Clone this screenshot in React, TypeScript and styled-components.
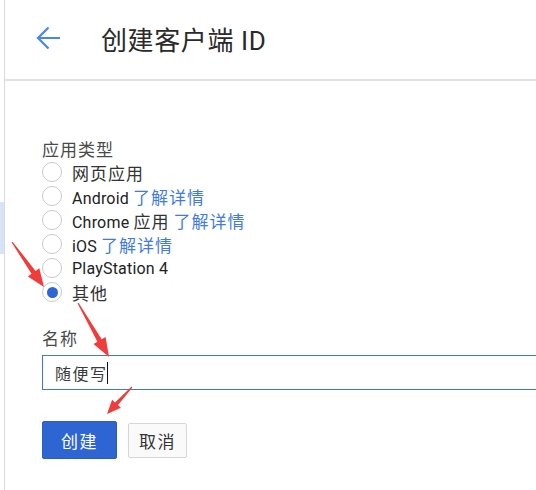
import React from "react";
import styled, { createGlobalStyle } from "styled-components";

const Global = createGlobalStyle`
  html, body { margin: 0; padding: 0; background: #fff; overflow: hidden; }
  body { font-family: Roboto, "Noto Sans CJK SC", sans-serif; color: #212121; }
  * { box-sizing: border-box; }
`;

const Page = styled.div`
  position: relative;
  width: 536px;
  height: 490px;
  display: flex;
  overflow: hidden;
`;

const Rail = styled.div`
  width: 5px;
  flex: none;
  border-right: 1px solid #dadada;
  display: flex;
  flex-direction: column;
  padding-top: 202px;
`;

const RailMark = styled.div`
  width: 4px;
  height: 52px;
  background: #d6e3f8;
`;

const Main = styled.div`
  flex: 1;
  display: flex;
  flex-direction: column;
  min-width: 0;
`;

const Header = styled.div`
  height: 81px;
  flex: none;
  display: flex;
  align-items: center;
  padding: 0 0 3px 31px;
  gap: 39px;
  border-bottom: 2px solid #e2e2e2;
`;

const BackButton = styled.div`
  width: 26px;
  height: 26px;
  display: flex;
  align-items: center;
  justify-content: center;
`;

const Title = styled.h1`
  margin: 0;
  font-size: 26px;
  font-weight: 400;
  color: #2a2a2a;
  letter-spacing: 0.6px;
`;

const Form = styled.div`
  display: flex;
  flex-direction: column;
  padding: 59px 0 0 37px;
`;

const FieldLabel = styled.div<{ $gap?: number }>`
  font-size: 17px;
  line-height: 20px;
  color: #4a4a4a;
  letter-spacing: 1px;
  margin-top: ${(p) => p.$gap ?? 0}px;
`;

const RadioList = styled.div`
  display: flex;
  flex-direction: column;
`;

const RadioRow = styled.div`
  height: 24px;
  display: flex;
  align-items: center;
  gap: 10px;
  font-size: 16px;
  color: #222;
`;

const RadioCircle = styled.span<{ $checked?: boolean }>`
  width: 20px;
  height: 20px;
  border-radius: 50%;
  border: 1.5px solid #c9c9c9;
  display: flex;
  align-items: center;
  justify-content: center;
  flex: none;
  &::after {
    content: "";
    width: 11px;
    height: 11px;
    border-radius: 50%;
    background: ${(p) => (p.$checked ? "#2f66d6" : "transparent")};
  }
`;

const RadioText = styled.span`
  letter-spacing: 0.2px;
`;

const Cjk = styled.span`
  font-size: 17px;
  letter-spacing: 1px;
  color: #333;
`;

const Link = styled.span`
  color: #3f7be0;
  font-size: 17px;
  letter-spacing: 1px;
  margin-left: 4px;
`;

const TextBox = styled.div`
  margin-top: 6px;
  width: 560px;
  height: 35px;
  border: 1px solid #3d78dc;
  display: flex;
  align-items: center;
  padding-left: 12px;
  font-size: 16px;
  color: #3a3a3a;
  letter-spacing: 1.5px;
`;

const Caret = styled.span`
  width: 1.5px;
  height: 22px;
  background: #111;
  margin-left: -1px;
`;

const Actions = styled.div`
  margin-top: 31px;
  display: flex;
  align-items: center;
  gap: 11px;
`;

const Button = styled.button<{ $primary?: boolean }>`
  font-family: Roboto, "Noto Sans CJK SC", sans-serif;
  font-size: 17px;
  letter-spacing: 1.5px;
  border-radius: 2px;
  cursor: pointer;
  height: ${(p) => (p.$primary ? 38 : 35)}px;
  width: ${(p) => (p.$primary ? 75 : 59)}px;
  padding: 0;
  background: ${(p) => (p.$primary ? "#2f64d3" : "#fafafa")};
  color: ${(p) => (p.$primary ? "#fff" : "#333")};
  border: 1px solid ${(p) => (p.$primary ? "#2a5cc6" : "#d6d6d6")};
`;

const Overlay = styled.svg`
  position: absolute;
  left: 0;
  top: 0;
  width: 536px;
  height: 490px;
  pointer-events: none;
`;

type Pt = [number, number];

function arrowPoints(tail: Pt, tip: Pt, headLen: number, headW: number, shaftW: number) {
  const dx = tip[0] - tail[0];
  const dy = tip[1] - tail[1];
  const len = Math.hypot(dx, dy);
  const ux = dx / len;
  const uy = dy / len;
  const nx = -uy;
  const ny = ux;
  const bx = tip[0] - ux * headLen;
  const by = tip[1] - uy * headLen;
  const pts: Pt[] = [
    [tail[0] + nx * 0.6, tail[1] + ny * 0.6],
    [bx + nx * shaftW / 2, by + ny * shaftW / 2],
    [bx + nx * headW / 2, by + ny * headW / 2],
    [tip[0], tip[1]],
    [bx - nx * headW / 2, by - ny * headW / 2],
    [bx - nx * shaftW / 2, by - ny * shaftW / 2],
    [tail[0] - nx * 0.6, tail[1] - ny * 0.6],
  ];
  return pts.map((p) => p.map((v) => v.toFixed(1)).join(",")).join(" ");
}

const RedArrow: React.FC<{ tail: Pt; tip: Pt; headLen?: number; headW?: number; shaftW?: number }> = ({
  tail,
  tip,
  headLen = 17,
  headW = 13,
  shaftW = 5,
}) => <polygon points={arrowPoints(tail, tip, headLen, headW, shaftW)} fill="#f23b3b" />;

const options: { label: React.ReactNode; link?: boolean; checked?: boolean }[] = [
  { label: <Cjk>网页应用</Cjk> },
  { label: "Android", link: true },
  { label: <>Chrome <Cjk>应用</Cjk></>, link: true },
  { label: "iOS", link: true },
  { label: "PlayStation 4" },
  { label: <Cjk>其他</Cjk>, checked: true },
];

export default function App() {
  return (
    <>
      <Global />
      <Page>
        <Rail>
          <RailMark />
        </Rail>
        <Main>
          <Header>
            <BackButton>
              <svg width="26" height="26" viewBox="0 0 26 26" fill="none">
                <path d="M24 13H2.5M12.5 2.5L2 13l10.5 10.5" stroke="#4a84ee" strokeWidth="2.2" />
              </svg>
            </BackButton>
            <Title>创建客户端 ID</Title>
          </Header>
          <Form>
            <FieldLabel>应用类型</FieldLabel>
            <RadioList>
              {options.map((o, i) => (
                <RadioRow key={i}>
                  <RadioCircle $checked={o.checked} />
                  <RadioText>
                    {o.label}
                    {o.link && <Link>了解详情</Link>}
                  </RadioText>
                </RadioRow>
              ))}
            </RadioList>
            <FieldLabel $gap={25}>名称</FieldLabel>
            <TextBox>
              随便写
              <Caret />
            </TextBox>
            <Actions>
              <Button $primary>创建</Button>
              <Button>取消</Button>
            </Actions>
          </Form>
        </Main>
        <Overlay viewBox="0 0 536 490">
          <RedArrow tail={[12, 242]} tip={[44, 287]} headLen={18} headW={14} />
          <RedArrow tail={[78, 303]} tip={[109, 357]} headLen={19} headW={14} />
          <RedArrow tail={[132, 387]} tip={[107, 414]} headLen={14} headW={12} shaftW={4} />
        </Overlay>
      </Page>
    </>
  );
}
